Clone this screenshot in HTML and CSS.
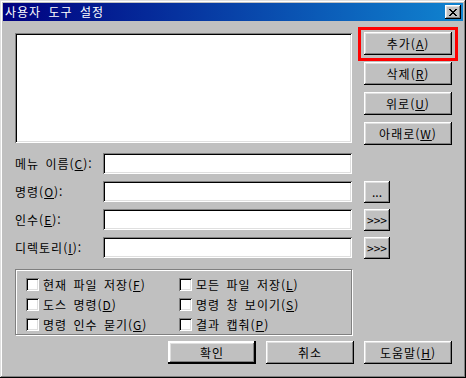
FILE: index.html
```html
<!DOCTYPE html>
<html lang="ko">

<head>
    <meta charset="UTF-8">
    <title>사용자 도구 설정</title>
    <link rel="stylesheet" href="styles.css">
</head>

<body>
    <div class="window">
        <div class="titlebar">
            <span class="title">사용자 도구 설정</span>
            <button class="close-btn" aria-label="닫기">
                <svg width="8" height="7" viewBox="0 0 8 7" shape-rendering="crispEdges">
                    <path d="M0 0h2v1h-2zM6 0h2v1h-2zM1 1h2v1h-2zM5 1h2v1h-2zM2 2h4v1h-4zM3 3h2v1h-2zM2 4h4v1h-4zM1 5h2v1h-2zM5 5h2v1h-2zM0 6h2v1h-2zM6 6h2v1h-2z" fill="#000" />
                </svg>
            </button>
        </div>

        <div class="content">
            <div class="top">
                <div class="listbox"></div>
                <div class="side-buttons">
                    <div class="marked">
                        <button class="btn">추가(<u>A</u>)</button>
                        <span class="mark"></span>
                    </div>
                    <button class="btn">삭제(<u>R</u>)</button>
                    <button class="btn">위로(<u>U</u>)</button>
                    <button class="btn">아래로(<u>W</u>)</button>
                </div>
            </div>

            <div class="fields">
                <div class="field-row">
                    <label>메뉴 이름(<u>C</u>):</label>
                    <div class="textbox"></div>
                </div>
                <div class="field-row">
                    <label>명령(<u>O</u>):</label>
                    <div class="textbox"></div>
                    <button class="btn small-btn">...</button>
                </div>
                <div class="field-row">
                    <label>인수(<u>E</u>):</label>
                    <div class="textbox"></div>
                    <button class="btn small-btn">&gt;&gt;&gt;</button>
                </div>
                <div class="field-row">
                    <label>디렉토리(<u>I</u>):</label>
                    <div class="textbox"></div>
                    <button class="btn small-btn">&gt;&gt;&gt;</button>
                </div>
            </div>

            <div class="groupbox">
                <div class="check"><span class="checkbox"></span>현재 파일 저장(<u>F</u>)</div>
                <div class="check"><span class="checkbox"></span>모든 파일 저장(<u>L</u>)</div>
                <div class="check"><span class="checkbox"></span>도스 명령(<u>D</u>)</div>
                <div class="check"><span class="checkbox"></span>명령 창 보이기(<u>S</u>)</div>
                <div class="check"><span class="checkbox"></span>명령 인수 묻기(<u>G</u>)</div>
                <div class="check"><span class="checkbox"></span>결과 캡춰(<u>P</u>)</div>
            </div>

            <div class="dialog-buttons">
                <button class="btn default-btn">확인</button>
                <button class="btn">취소</button>
                <button class="btn">도움말(<u>H</u>)</button>
            </div>
        </div>
    </div>
</body>

</html>
```

FILE: styles.css
```css
body {
    margin: 0;
    background-color: #c0c0c0;
    font-family: "Noto Sans CJK KR", "Noto Sans", sans-serif;
    font-size: 12px;
    letter-spacing: 1px;
    word-spacing: 2px;
    color: #000;
}

.window {
    width: 466px;
    height: 378px;
    box-sizing: border-box;
    padding: 3px;
    background-color: #c0c0c0;
    box-shadow: inset -1px -1px #000, inset 1px 1px #dfdfdf, inset -2px -2px #808080, inset 2px 2px #fff;
}

.titlebar {
    height: 18px;
    display: flex;
    align-items: center;
    justify-content: space-between;
    padding: 0 2px 0 2px;
    background: linear-gradient(to right, #000080, #1084d0);
}

.title {
    color: #fff;
    font-size: 12px;
    line-height: 16px;
    word-spacing: 3px;
}

.close-btn {
    width: 16px;
    height: 14px;
    padding: 0;
    border: none;
    display: flex;
    align-items: center;
    justify-content: center;
    background-color: #c0c0c0;
    box-shadow: inset -1px -1px #000, inset 1px 1px #fff, inset -2px -2px #808080, inset 2px 2px #dfdfdf;
}

.content {
    padding: 11px 0 0 12px;
}

.btn {
    height: 23px;
    width: 88px;
    padding: 0;
    border: none;
    background-color: #c0c0c0;
    font-family: inherit;
    font-size: 12px;
    line-height: 14px;
    letter-spacing: 1px;
    word-spacing: 2px;
    color: #000;
    box-shadow: inset -1px -1px #000, inset 1px 1px #fff, inset -2px -2px #808080, inset 2px 2px #dfdfdf;
}

.top {
    display: flex;
    gap: 12px;
}

.listbox {
    width: 337px;
    height: 110px;
    margin-top: 1px;
    box-sizing: border-box;
    background-color: #fff;
    box-shadow: inset 1px 1px #808080, inset -1px -1px #fff, inset 2px 2px #000, inset -2px -2px #dfdfdf;
}

.side-buttons {
    display: flex;
    flex-direction: column;
    gap: 7px;
}

.marked {
    position: relative;
    height: 23px;
}

.mark {
    position: absolute;
    left: -6px;
    right: -6px;
    top: -5px;
    bottom: -6px;
    border: 3px solid #ff0000;
}

.fields {
    display: flex;
    flex-direction: column;
    gap: 7px;
    margin-top: 8px;
}

.field-row {
    display: flex;
    align-items: center;
    height: 21px;
}

.field-row label {
    width: 88px;
    white-space: nowrap;
}

.textbox {
    width: 249px;
    height: 21px;
    box-sizing: border-box;
    background-color: #fff;
    box-shadow: inset 1px 1px #808080, inset -1px -1px #fff, inset 2px 2px #000, inset -2px -2px #dfdfdf;
}

.small-btn {
    width: 26px;
    height: 22px;
    margin-left: 12px;
    letter-spacing: 0;
}

.groupbox {
    width: 337px;
    height: 66px;
    box-sizing: border-box;
    margin-top: 11px;
    padding: 4px 0 0 10px;
    display: grid;
    grid-template-columns: 153px auto;
    grid-auto-rows: 20px;
    align-items: center;
    border: 1px solid #808080;
    box-shadow: inset 1px 1px #fff, 1px 1px #fff;
}

.check {
    display: flex;
    align-items: center;
    white-space: nowrap;
}

.checkbox {
    width: 13px;
    height: 13px;
    margin-right: 4px;
    box-sizing: border-box;
    background-color: #fff;
    box-shadow: inset 1px 1px #808080, inset -1px -1px #fff, inset 2px 2px #000, inset -2px -2px #dfdfdf;
}

.dialog-buttons {
    display: flex;
    justify-content: flex-end;
    gap: 10px;
    width: 437px;
    margin-top: 6px;
}

.default-btn {
    box-shadow: inset -2px -2px #000, inset 2px 2px #fff, inset -3px -3px #808080, inset 3px 3px #dfdfdf, inset 0 0 0 1px #000;
}
```
